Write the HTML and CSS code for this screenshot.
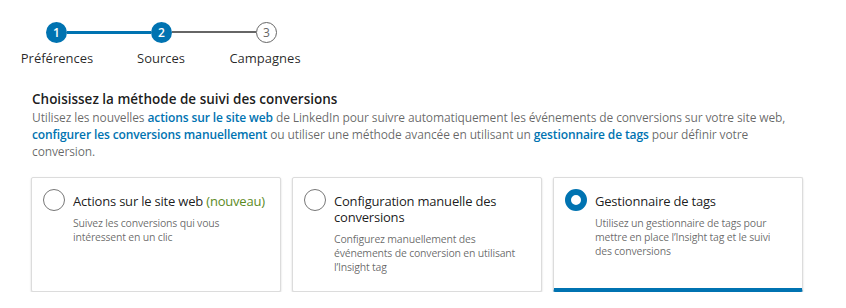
FILE: index.html
```html
<!DOCTYPE html>
<html lang="fr">
<head>
<meta charset="utf-8">
<link rel="stylesheet" href="styles.css">
</head>
<body>
<div class="page">
  <div class="stepper">
    <div class="track">
      <span class="dot dot-done">1</span>
      <span class="bar bar-done"></span>
      <span class="dot dot-done">2</span>
      <span class="bar bar-todo"></span>
      <span class="dot dot-todo">3</span>
    </div>
    <div class="labels">
      <span class="label">Préférences</span>
      <span class="label">Sources</span>
      <span class="label">Campagnes</span>
    </div>
  </div>

  <section class="method">
    <h2 class="title">Choisissez la méthode de suivi des conversions</h2>
    <p class="intro">Utilisez les nouvelles <a class="link">actions sur le site web</a> de LinkedIn pour suivre automatiquement les événements de conversions sur votre site web, <a class="link">configurer les conversions manuellement</a> ou utiliser une méthode avancée en utilisant un <a class="link">gestionnaire de tags</a> pour définir votre conversion.</p>

    <div class="cards">
      <div class="card">
        <span class="radio"></span>
        <div class="card-body">
          <div class="card-title">Actions sur le site web <span class="new">(nouveau)</span></div>
          <div class="card-desc">Suivez les conversions qui vous intéressent en un clic</div>
        </div>
      </div>
      <div class="card">
        <span class="radio"></span>
        <div class="card-body">
          <div class="card-title">Configuration manuelle des conversions</div>
          <div class="card-desc">Configurez manuellement des événements de conversion en utilisant l’Insight tag</div>
        </div>
      </div>
      <div class="card card-selected">
        <span class="radio radio-on"></span>
        <div class="card-body">
          <div class="card-title">Gestionnaire de tags</div>
          <div class="card-desc">Utilisez un gestionnaire de tags pour mettre en place l’Insight tag et le suivi des conversions</div>
        </div>
      </div>
    </div>
  </section>
</div>
</body>
</html>
```

FILE: styles.css
```css
* { box-sizing: border-box; }
html, body { margin: 0; padding: 0; background: #fff; }
body {
  font-family: "Open Sans", "Noto Sans", "Liberation Sans", sans-serif;
  color: rgba(0,0,0,0.9);
}
.page { padding-top: 21px; }

.stepper { padding-left: 46px; }
.track { display: flex; align-items: center; height: 22px; }
.dot {
  width: 21px; height: 21px; border-radius: 50%;
  display: flex; align-items: center; justify-content: center;
  font-size: 12px; font-weight: 600; flex: none;
}
.dot-done { background: #0073b1; color: #fff; }
.dot-todo { border: 1px solid #666; color: #666; font-weight: 400; background: #fff; }
.bar { display: block; width: 84px; flex: none; }
.bar-done { height: 3px; background: #0073b1; }
.bar-todo { height: 2px; background: #666; }

.labels {
  display: grid; grid-template-columns: repeat(3, 104px);
  margin-left: -41px; margin-top: 6px;
}
.label { text-align: center; font-size: 13px; line-height: 18px; color: rgba(0,0,0,0.85); }

.method { padding: 0 0 0 31px; margin-top: 22px; }
.title { margin: 0 0 0 1px; font-size: 13.5px; font-weight: 600; line-height: 20px; }
.intro {
  margin: 0 0 0 1px; width: 775px;
  font-size: 12px; letter-spacing: -0.12px; line-height: 17px; color: rgba(0,0,0,0.6);
}
.link { color: #0073b1; font-weight: 600; }

.cards {
  display: grid; grid-template-columns: repeat(3, 250px); gap: 11px;
  margin-top: 17px;
}
.card {
  height: 115px; display: flex; gap: 8px; align-items: flex-start;
  padding: 11px 14px 0 11px;
  border: 1px solid #dcdcdc; border-radius: 2px;
  box-shadow: 0 1px 2px rgba(0,0,0,0.18);
  background: #fff;
}
.card-selected { border-bottom: 4px solid #0073b1; }
.radio {
  flex: none; width: 22px; height: 22px; border-radius: 50%;
  border: 1px solid #777; background: #fff;
}
.radio-on { border: 6px solid #0073b1; }
.card-body { padding-top: 4px; }
.card-title { font-size: 13px; letter-spacing: -0.2px; line-height: 16px; color: rgba(0,0,0,0.9); }
.new { color: #5b8a1e; }
.card-desc { margin-top: 7px; font-size: 10.5px; letter-spacing: -0.2px; line-height: 14px; color: rgba(0,0,0,0.6); }
```
